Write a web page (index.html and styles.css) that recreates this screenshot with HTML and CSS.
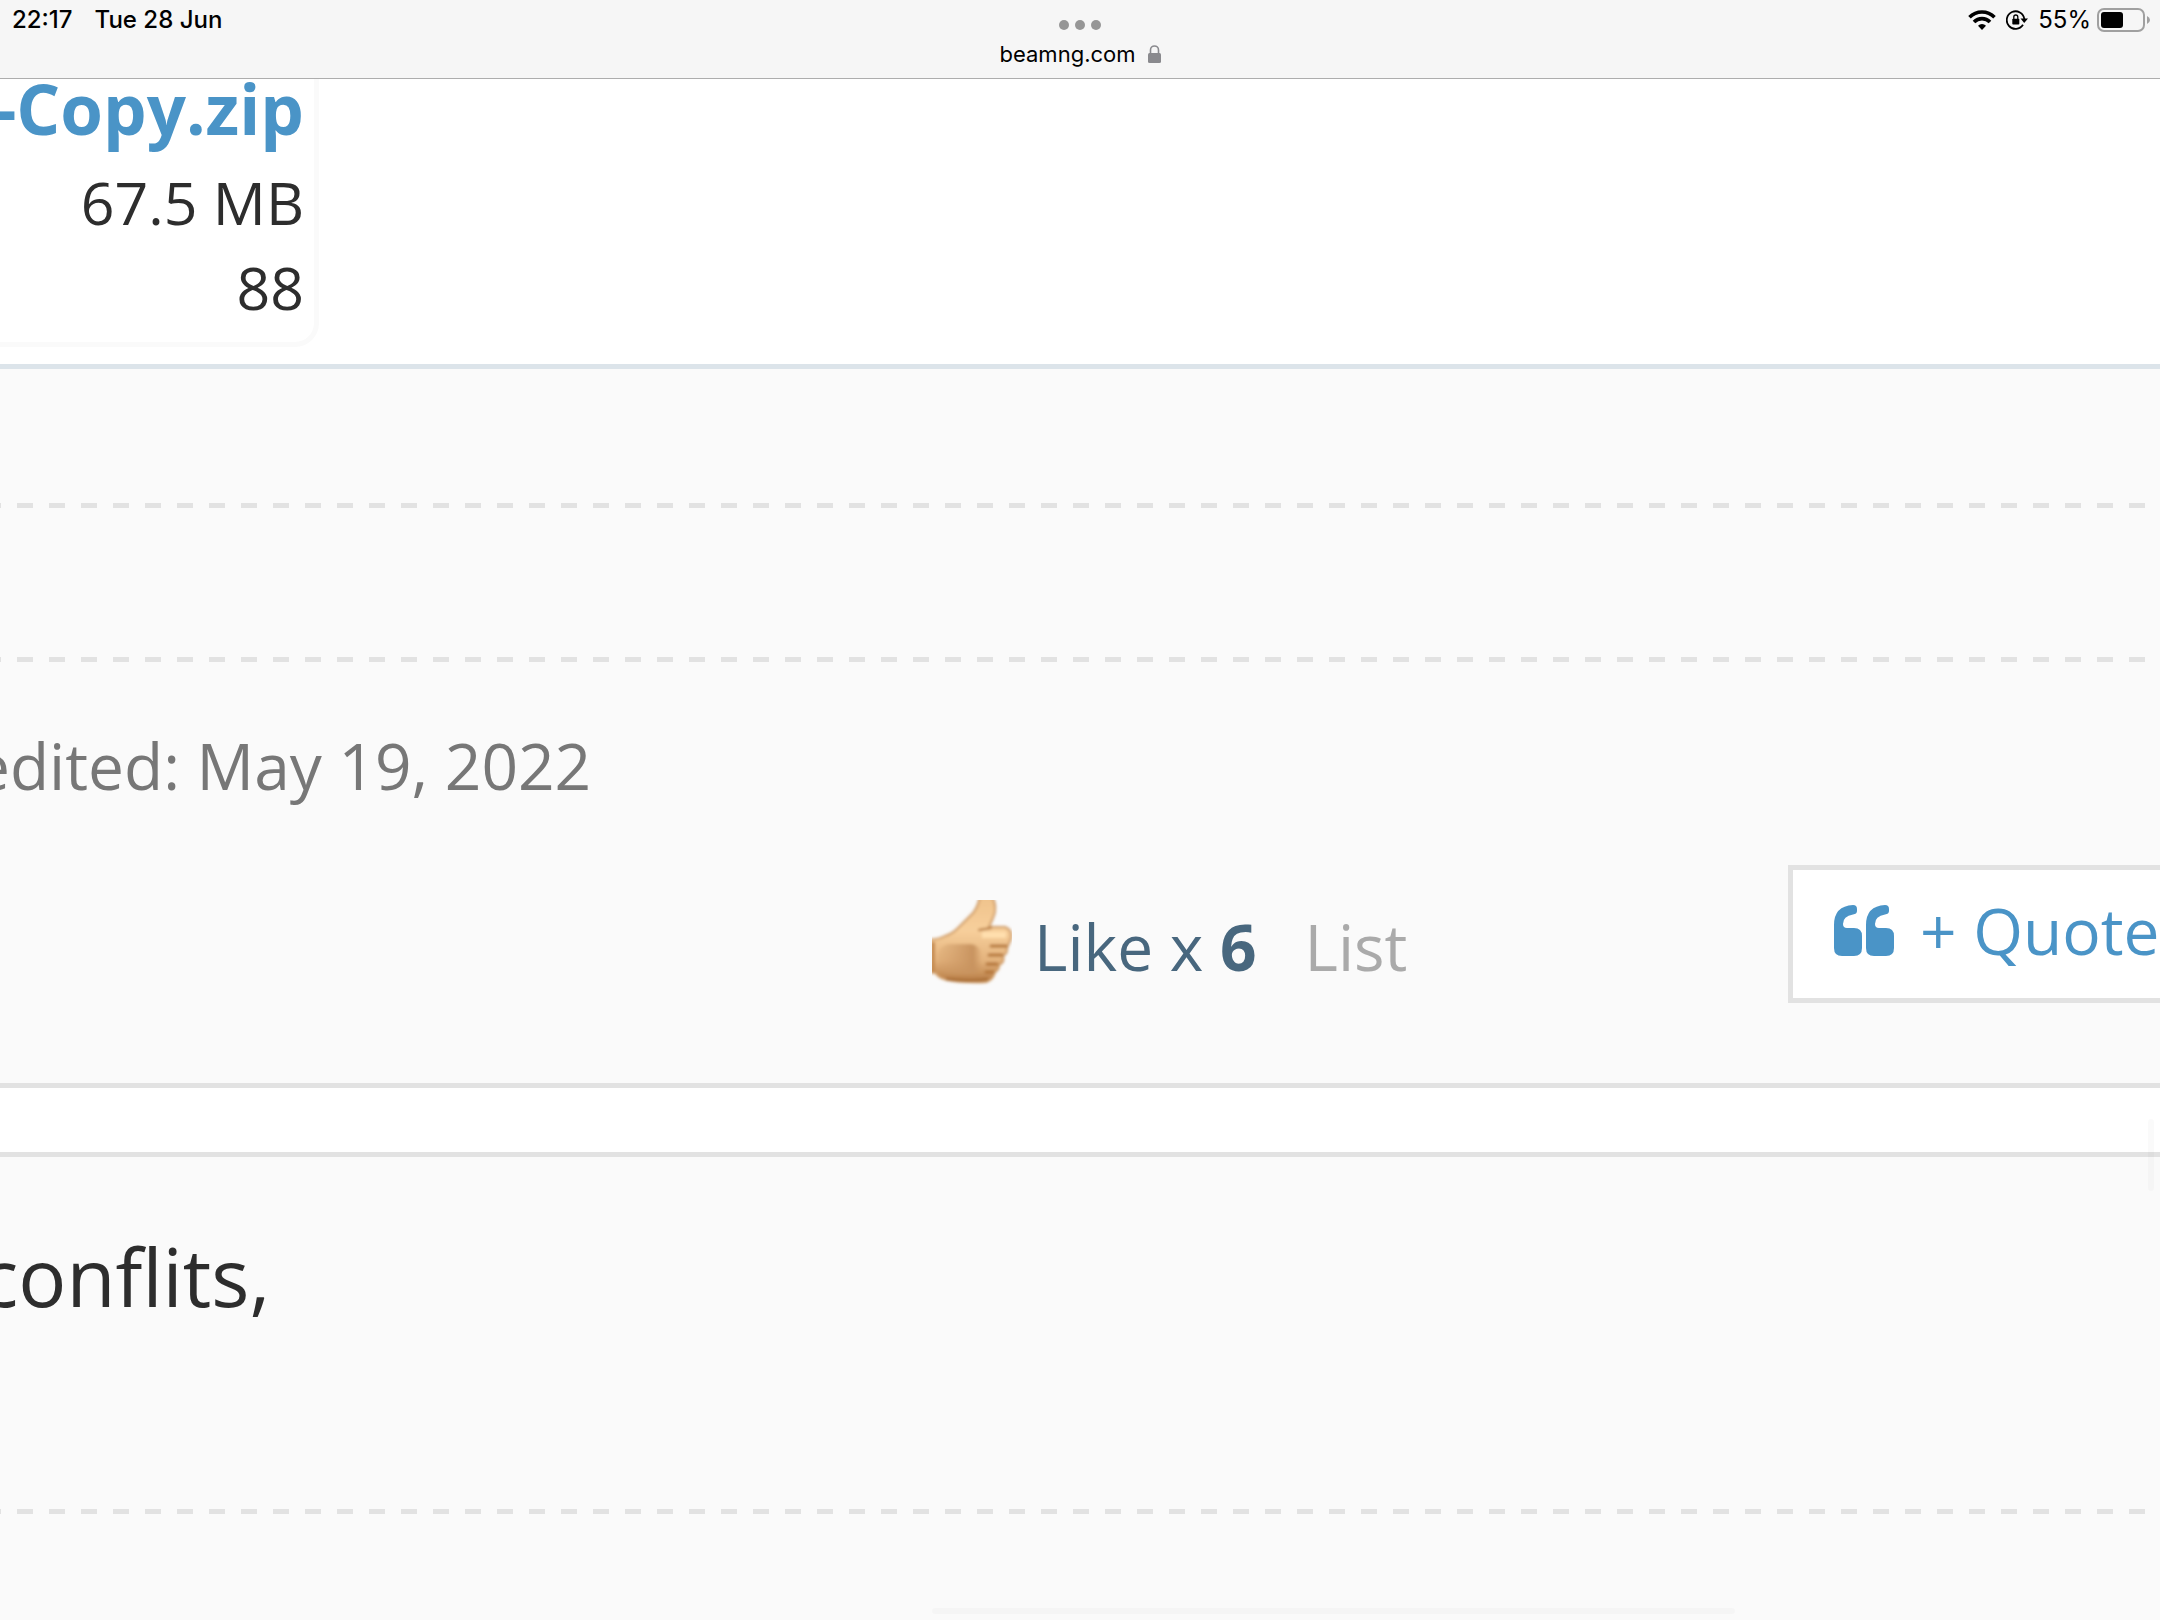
FILE: index.html
```
<!DOCTYPE html>
<html lang="en">
<head>
  <meta charset="UTF-8">
  <meta name="viewport" content="width=device-width, initial-scale=1.0">
  <title>BeamNG</title>
  <link rel="stylesheet" href="styles.css">
</head>
<body>
  <header class="topbar">
    <div class="status">
      <span>22:17</span>
      <span>Tue 28 Jun</span>
    </div>
    <div class="address">
      <svg width="42" height="10" viewBox="0 0 42 10" fill="#969696">
        <circle cx="5" cy="5" r="5"/><circle cx="21" cy="5" r="5"/><circle cx="37" cy="5" r="5"/>
      </svg>
      <div class="url">
        <span>beamng.com</span>
        <svg width="13" height="18" viewBox="0 0 13 18">
          <path d="M2.500 9V5a4 4 0 0 1 8 0v4" fill="none" stroke="#8a8a8e" stroke-width="1.6"/>
          <rect y="8" width="13" height="10" rx="1.5" fill="#8a8a8e"/>
        </svg>
      </div>
    </div>
    <div class="status status-right">
      <svg width="28" height="20" viewBox="0 0 28 20">
        <g fill="none" stroke="#000" stroke-width="3.6">
          <path d="M1.5 7.2a17.6 17.6 0 0 1 25 0"/>
          <path d="M6 12a11.2 11.2 0 0 1 16 0"/>
        </g>
        <path d="M14 20l-4-4.2a5.6 5.6 0 0 1 8 0z"/>
      </svg>
      <svg width="22" height="20" viewBox="0 0 22 20">
        <path d="M17 14.8a8.800 8.800 0 1 1 1.300-5.800" fill="none" stroke="#000" stroke-width="1.8"/>
        <path d="M14.500 8.500h7.500l-3.800 4.500z"/>
        <rect x="6.300" y="8.800" width="7" height="5.800" rx=".8"/>
        <path d="M7.800 9V7a2 2 0 0 1 4 0v2" fill="none" stroke="#000" stroke-width="1.3"/>
      </svg>
      <span>55%</span>
      <svg class="battery" width="53" height="24" viewBox="0 0 53 24">
        <rect x="1" y="1" width="46" height="22" rx="6" fill="none" stroke="#a0a0a0" stroke-width="2"/>
        <rect x="4" y="4" width="22" height="16" rx="3"/>
        <path d="M50 8q3 1.500 3 4t-3 4z" fill="#a0a0a0"/>
      </svg>
    </div>
  </header>

  <main class="thread">
    <article class="post">
      <div class="attachments">
        <div class="attachment">
          <a class="filename" href="#">-Copy.zip</a>
          <span>67.5 MB</span>
          <span>88</span>
        </div>
      </div>
      <div class="signature"></div>
      <div class="signature signature-small"></div>
      <p class="edited">edited: May 19, 2022</p>
      <div class="controls">
        <div class="ratings">
          <svg class="thumb" width="80" height="86" viewBox="0 0 80 86">
            <defs>
              <linearGradient id="skin" x1="0" y1="0" x2="0" y2="1">
                <stop offset="0" stop-color="#efc28b"/>
                <stop offset=".4" stop-color="#f7cf9b"/>
                <stop offset=".75" stop-color="#e3b27c"/>
                <stop offset="1" stop-color="#b57a42"/>
              </linearGradient>
              <linearGradient id="palm">
                <stop offset="0" stop-color="#cf9c68" stop-opacity=".2"/>
                <stop offset=".8" stop-color="#c8935f"/>
                <stop offset="1" stop-color="#c8935f" stop-opacity="0"/>
              </linearGradient>
              <filter id="soft"><feGaussianBlur stdDeviation="1.4"/></filter>
            </defs>
            <g filter="url(#soft)">
              <path d="M-4 40Q8 39 13 36Q20 34 26 28L41 13Q46 7 48-4H60Q66 8 61 18L57 27H73Q81 30 79 39L75 48Q76 53 71 56Q73 62 67 65Q67 70 63 72Q61 80 54 82Q28 83 12 79Q6 77 4 73L-4 72Z" fill="url(#skin)" stroke="#cf9a63" stroke-width="2"/>
              <rect x="6" y="44" width="44" height="30" rx="12" fill="url(#palm)"/>
              <path d="M1 42v30" stroke="#c58a50" stroke-width="4"/>
              <path d="M50 35h24" stroke="#ffdfae" stroke-width="6"/>
              <path d="M14 79q26 3 42 0" fill="none" stroke="#ab7037" stroke-width="3"/>
              <g stroke="#b27336" stroke-width="3" stroke-linecap="round">
                <path d="M59 46h15M57 55h13M55 64h10M54 72h7"/>
                <path d="M47 30l12-2" stroke-width="2"/>
              </g>
            </g>
          </svg>
          <span class="like">Like x <strong>6</strong></span>
          <a class="list" href="#">List</a>
        </div>
        <button class="quote" type="button">
          <svg width="60" height="51" viewBox="0 0 60 51" fill="#4a94c7">
            <path id="mark" d="M8 51Q0 51 0 43V20Q0 1 19 0Q23 0 23 4V6Q23 9 19 9.500Q9 11 9 19Q9 23 13 23H20Q28 23 28 31V43Q28 51 20 51Z"/>
            <use href="#mark" x="32"/>
          </svg>
          <span>+ Quote</span>
        </button>
      </div>
    </article>

    <article class="post post-next">
      <p class="message">conflits,</p>
      <div class="signature"></div>
    </article>
  </main>

  <div class="scroll-y"></div>
  <div class="scroll-x"></div>
</body>
</html>
```
FILE: styles.css
```
* {
  box-sizing: border-box;
}

body {
  margin: 0;
  height: 100vh;
  display: flex;
  flex-direction: column;
  overflow: hidden;
  background: #fff;
  color: #2d2d2d;
  font-family: "Open Sans", "Noto Sans", sans-serif;
}

a {
  text-decoration: none;
}

p {
  margin: 0;
}

/* browser bar */
.topbar {
  flex: none;
  height: 79px;
  display: grid;
  grid-template-columns: 1fr auto 1fr;
  background: #f6f6f6;
  border-bottom: 1px solid #adadad;
  color: #000;
  font-family: Inter, "Liberation Sans", sans-serif;
  font-size: 24px;
  line-height: 24px;
}

.status {
  display: flex;
  align-items: center;
  height: 24px;
  margin-top: 8px;
  padding-left: 12px;
  gap: 22px;
  font-weight: 500;
}

.status-right {
  justify-content: flex-end;
  padding: 0 10px 0 0;
  gap: 10px;
  font-weight: 400;
}

.battery {
  margin-left: -4px;
}

.address {
  display: flex;
  flex-direction: column;
  align-items: center;
  padding-top: 20px;
  gap: 12px;
}

.url {
  display: flex;
  align-items: center;
  gap: 12px;
  font-size: 22px;
}

/* posts */
.thread {
  flex: 1;
  min-height: 0;
  overflow: hidden;
}

.post {
  background: #fafafa;
  border-bottom: 5px solid #e2e2e2;
}

.post-next {
  margin-top: 64px;
  border-top: 5px solid #e2e2e2;
  border-bottom: 0;
  padding-bottom: 110px;
}

.attachments {
  background: #fff;
  border-bottom: 5px solid #dce4ea;
  padding-bottom: 17px;
}

.attachment {
  width: 319px;
  display: flex;
  flex-direction: column;
  align-items: flex-end;
  overflow: hidden;
  padding: 0 10px 12px 0;
  border: solid #fafafa;
  border-width: 0 5px 5px 0;
  border-bottom-right-radius: 24px;
  font-size: 59px;
  line-height: 85px;
  white-space: nowrap;
}

.filename {
  margin-bottom: 23px;
  color: #4a94c7;
  font-size: 69px;
  font-weight: 700;
  line-height: 58px;
}

.signature {
  height: 139px;
  margin-right: 15px;
  background: repeating-linear-gradient(to left, #e2e2e2 0 16px, transparent 16px 32px) bottom / 100% 5px no-repeat;
}

.signature-small {
  height: 154px;
}

.edited {
  margin: 61px 0 0 -26px;
  color: #777;
  font-size: 64px;
  line-height: 86px;
}

.controls {
  display: flex;
  justify-content: space-between;
  height: 274px;
  padding: 56px 0 0 932px;
  font-size: 64px;
  line-height: 86px;
  white-space: nowrap;
}

.ratings {
  display: flex;
  align-items: flex-start;
  margin-top: 35px;
}

.like {
  margin: 4px 0 0 22px;
  color: #48677e;
}

.list {
  margin: 4px 0 0 48px;
  color: #aaa;
}

.quote {
  display: flex;
  align-items: center;
  width: 372px;
  height: 138px;
  flex: none;
  gap: 26px;
  padding: 0 0 7px 41px;
  overflow: hidden;
  background: #fff;
  border: 5px solid #e2e2e2;
  border-right: 0;
  color: #4a94c7;
  font: inherit;
}

.message {
  margin-left: -20px;
  padding-top: 65px;
  font-size: 80px;
  line-height: 108px;
}

.post-next .signature {
  height: 184px;
}

/* scroll indicators over the page */
.scroll-y,
.scroll-x {
  position: absolute;
  border-radius: 3px;
  background: rgba(0, 0, 0, 0.02);
}

.scroll-y {
  top: 1119px;
  right: 6px;
  width: 6px;
  height: 72px;
}

.scroll-x {
  left: 932px;
  bottom: 6px;
  width: 803px;
  height: 6px;
}
```
